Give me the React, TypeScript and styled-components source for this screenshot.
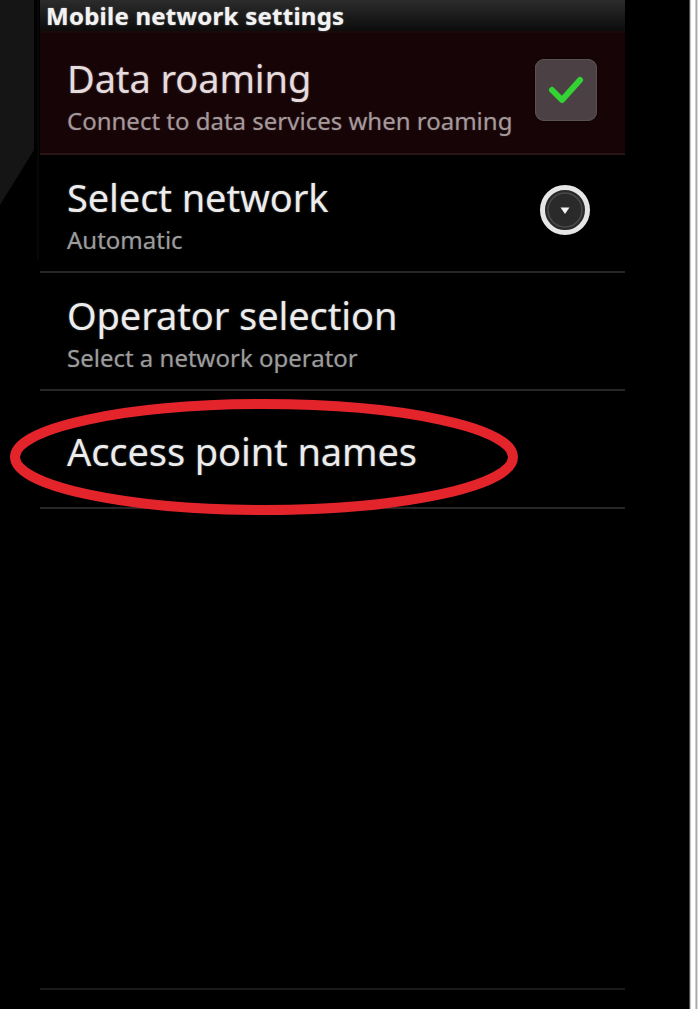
import React from "react";
import styled, { createGlobalStyle } from "styled-components";

const Global = createGlobalStyle`
  html, body { margin: 0; padding: 0; background: #000; }
  body { font-family: "Noto Sans", "Open Sans", sans-serif; }
`;

const Page = styled.div`
  display: flex;
  height: 1009px;
  width: 700px;
  background: #000;
  overflow: hidden;
`;

const LeftEdge = styled.div`
  width: 40px;
  flex: none;
  svg { display: block; }
`;

const Panel = styled.div`
  width: 585px;
  flex: none;
  display: flex;
  flex-direction: column;
`;

const Spacer = styled.div`
  flex: 1;
`;

const RightBezel = styled.div`
  width: 11px;
  flex: none;
  background: linear-gradient(
    to right,
    #101010 0px,
    #8a8a8a 1px,
    #ffffff 2px,
    #ffffff 6px,
    #9a9a9a 7px,
    #b8b8b8 8px,
    #ffffff 9px,
    #ffffff 11px
  );
`;

const Header = styled.div`
  height: 31px;
  flex: none;
  border-bottom: 2px solid #1c0a0b;
  background: linear-gradient(to bottom, #2c2c2c 0%, #1a1a1a 55%, #0c0c0c 100%);
  display: flex;
  align-items: flex-start;
  padding-left: 6px;
`;

const HeaderText = styled.span`
  color: #f2f2f2;
  font-weight: 700;
  font-size: 24px;
  line-height: 33px;
  margin-top: -1px;
  letter-spacing: 0.25px;
  text-shadow: 0 0 1.5px rgba(255, 255, 255, 0.6);
  white-space: nowrap;
`;

const Row = styled.div<{ $h: number; $active?: boolean }>`
  position: relative;
  flex: none;
  height: ${(p) => p.$h}px;
  box-sizing: content-box;
  border-bottom: 2px solid ${(p) => (p.$active ? "#2a1416" : "#262626")};
  background: ${(p) => (p.$active ? "#160406" : "transparent")};
  display: flex;
  align-items: center;
  padding: 0 28px 0 27px;
`;

const Texts = styled.div<{ $shift?: number }>`
  flex: 1;
  display: flex;
  flex-direction: column;
  margin-top: ${(p) => p.$shift ?? 0}px;
`;

const Title = styled.div<{ $active?: boolean }>`
  font-size: 38px;
  line-height: 44px;
  color: ${(p) => (p.$active ? "#e6dcde" : "#ececec")};
  letter-spacing: -0.1px;
  text-shadow: 0 0 2px rgba(255, 255, 255, 0.35);
  white-space: nowrap;
`;

const Sub = styled.div<{ $active?: boolean }>`
  font-size: 24px;
  line-height: 28px;
  margin-top: 7px;
  color: ${(p) => (p.$active ? "#a5999b" : "#9c9c9c")};
  letter-spacing: 0;
  text-shadow: 0 0 1.5px rgba(255, 255, 255, 0.25);
  white-space: nowrap;
`;

const CheckBox = styled.div`
  width: 62px;
  height: 62px;
  flex: none;
  border-radius: 9px;
  background: #4b4044;
  box-shadow: inset 0 0 0 1px #5a4f53, 0 0 2px rgba(0, 0, 0, 0.6);
  display: flex;
  align-items: center;
  justify-content: center;
  margin-top: -6px;
  svg { display: block; }
`;

const DropIcon = styled.div`
  width: 52px;
  height: 52px;
  flex: none;
  margin-right: 6px;
  margin-top: -6px;
  svg { display: block; }
`;

const Filler = styled.div`
  flex: none;
  height: 479px;
  border-bottom: 2px solid #1a1a1a;
`;

const Annotation = styled.svg`
  position: absolute;
  left: -32px;
  top: 4px;
  pointer-events: none;
`;

export default function App() {
  return (
    <>
      <Global />
      <Page>
        <LeftEdge>
          <svg width="40" height="260" viewBox="0 0 40 260">
            <polygon points="0,0 34,0 34,150 0,205" fill="#151515" />
            <line x1="38" y1="0" x2="38" y2="260" stroke="#0e0e0e" strokeWidth="1" />
          </svg>
        </LeftEdge>
        <Panel>
          <Header>
            <HeaderText>Mobile network settings</HeaderText>
          </Header>
          <Row $h={120} $active>
            <Texts $shift={4}>
              <Title $active>Data roaming</Title>
              <Sub $active>Connect to data services when roaming</Sub>
            </Texts>
            <CheckBox>
              <svg width="44" height="40" viewBox="0 0 44 40">
                <polyline
                  points="8,20 18,30 36,10"
                  fill="none"
                  stroke="#34d334"
                  strokeWidth="6"
                  strokeLinecap="round"
                  strokeLinejoin="round"
                />
              </svg>
            </CheckBox>
          </Row>
          <Row $h={116}>
            <Texts $shift={2}>
              <Title>Select network</Title>
              <Sub>Automatic</Sub>
            </Texts>
            <DropIcon>
              <svg width="52" height="52" viewBox="0 0 52 52">
                <circle cx="26" cy="26" r="22.5" fill="#2a2a2a" stroke="#e6e6e6" strokeWidth="5" />
                <circle cx="26" cy="26" r="17" fill="none" stroke="#4a4a4a" strokeWidth="1.5" />
                <polygon points="21.5,23.5 30.5,23.5 26,30" fill="#f4f4f4" />
              </svg>
            </DropIcon>
          </Row>
          <Row $h={116}>
            <Texts $shift={2}>
              <Title>Operator selection</Title>
              <Sub>Select a network operator</Sub>
            </Texts>
          </Row>
          <Row $h={116}>
            <Texts $shift={4}>
              <Title>Access point names</Title>
            </Texts>
            <Annotation width="516" height="124" viewBox="0 0 516 124">
              <ellipse
                cx="256"
                cy="62"
                rx="249"
                ry="53"
                fill="none"
                stroke="#e3242b"
                strokeWidth="10"
              />
            </Annotation>
          </Row>
          <Filler />
        </Panel>
        <Spacer />
        <RightBezel />
      </Page>
    </>
  );
}
